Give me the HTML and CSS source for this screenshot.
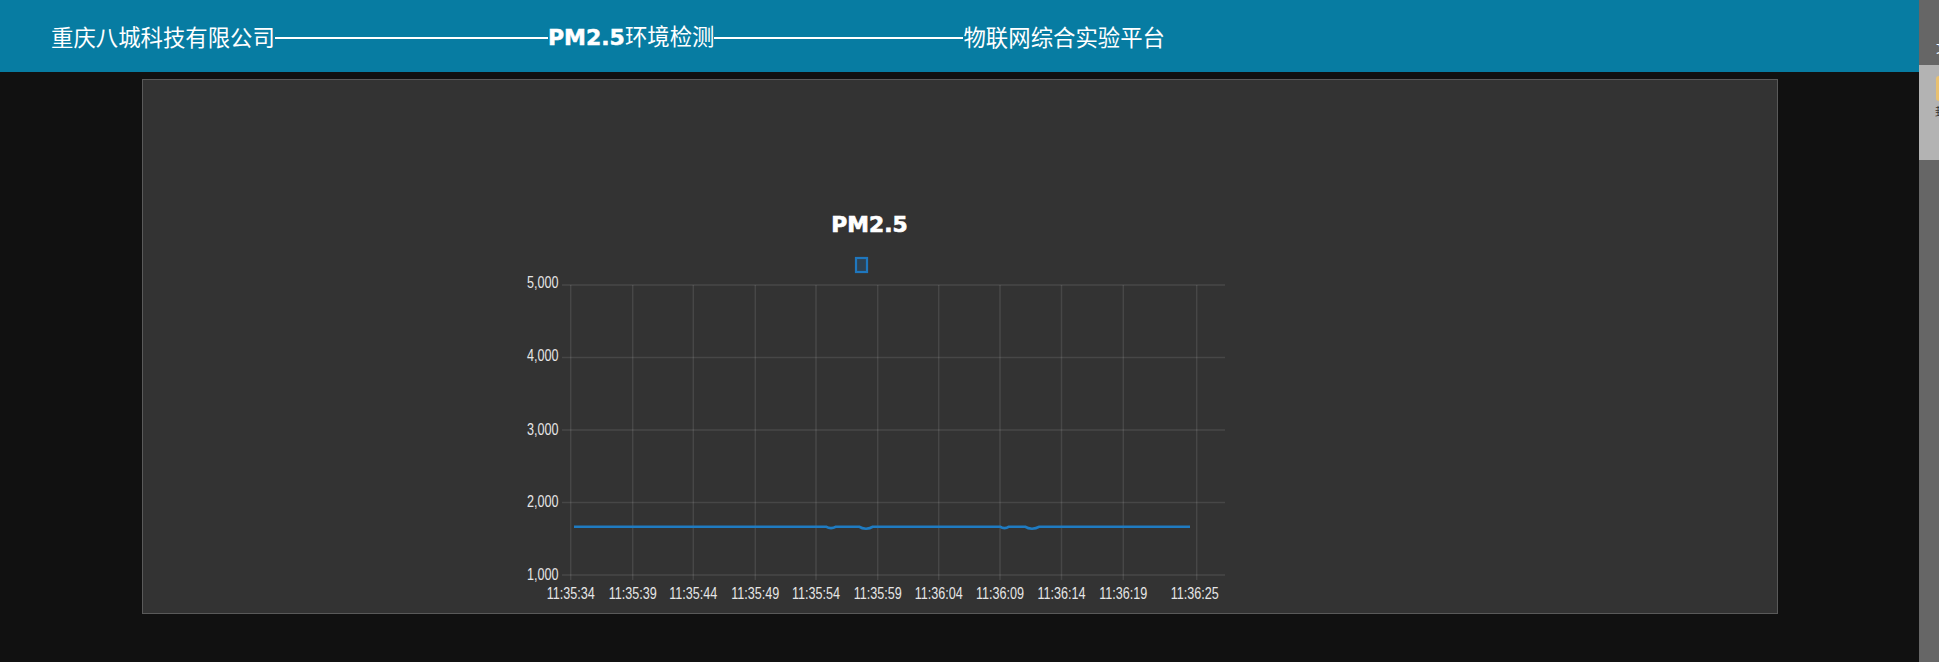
FILE: index.html
```html
<!DOCTYPE html>
<html lang="zh-CN">
<head>
<meta charset="utf-8">
<title>PM2.5环境检测</title>
<link rel="stylesheet" href="styles.css">
</head>
<body>
<div class="page">
  <header class="topbar">
    <span class="htext">重庆八城科技有限公司</span>
    <span class="hline hline-1"></span>
    <span class="htext"><b class="pm">PM2.5</b>环境检测</span>
    <span class="hline hline-2"></span>
    <span class="htext">物联网综合实验平台</span>
  </header>
  <main class="panel">
    <svg class="chart" width="1634" height="533" viewBox="143 80 1634 533" xmlns="http://www.w3.org/2000/svg">
      <text class="c-title" x="869.5" y="231.5" text-anchor="middle">PM2.5</text>
      <rect class="c-legend" x="856" y="258" width="11" height="14"/>
      <g class="c-grid">
        <line x1="562" y1="285" x2="1225" y2="285"/>
        <line x1="562" y1="357.5" x2="1225" y2="357.5"/>
        <line x1="562" y1="430" x2="1225" y2="430"/>
        <line x1="562" y1="502.5" x2="1225" y2="502.5"/>
        <line x1="562" y1="575" x2="1225" y2="575"/>
        <line x1="570.7" y1="285" x2="570.7" y2="580"/>
        <line x1="632.7" y1="285" x2="632.7" y2="580"/>
        <line x1="693.3" y1="285" x2="693.3" y2="580"/>
        <line x1="755.3" y1="285" x2="755.3" y2="580"/>
        <line x1="816" y1="285" x2="816" y2="580"/>
        <line x1="877.7" y1="285" x2="877.7" y2="580"/>
        <line x1="938.7" y1="285" x2="938.7" y2="580"/>
        <line x1="1000" y1="285" x2="1000" y2="580"/>
        <line x1="1061.5" y1="285" x2="1061.5" y2="580"/>
        <line x1="1123.3" y1="285" x2="1123.3" y2="580"/>
        <line x1="1196.7" y1="285" x2="1196.7" y2="580"/>
      </g>
      <g class="c-ylab" text-anchor="end">
        <text x="559" y="287.5">5,000</text>
        <text x="559" y="360">4,000</text>
        <text x="559" y="434">3,000</text>
        <text x="559" y="506.5">2,000</text>
        <text x="559" y="579">1,000</text>
      </g>
      <g class="c-xlab" text-anchor="middle">
        <text x="570.7" y="598">11:35:34</text>
        <text x="632.7" y="598">11:35:39</text>
        <text x="693.3" y="598">11:35:44</text>
        <text x="755.3" y="598">11:35:49</text>
        <text x="816" y="598">11:35:54</text>
        <text x="877.7" y="598">11:35:59</text>
        <text x="938.7" y="598">11:36:04</text>
        <text x="1000" y="598">11:36:09</text>
        <text x="1061.5" y="598">11:36:14</text>
        <text x="1123.3" y="598">11:36:19</text>
        <text x="1194.7" y="598">11:36:25</text>
      </g>
      <path class="c-line" d="M574 526.7 L826 526.7 Q831 529.5 836 526.7 L859 526.7 Q862 528.7 866 528.7 Q870 528.7 873 526.7 L1000 526.7 Q1004.5 529.5 1009 526.7 L1025 526.7 Q1028 528.7 1032 528.7 Q1036 528.7 1039.5 526.7 L1190 526.7"/>
    </svg>
  </main>
</div>
<aside class="sidedock">
  <div class="dock-top"><span class="dock-glyph">文</span></div>
  <div class="dock-panel">
    <span class="dock-tag"></span>
    <span class="dock-text">封</span>
  </div>
</aside>
</body>
</html>
```
FILE: styles.css
```css
html, body {
  margin: 0;
  padding: 0;
  background: #111111;
  height: 100%;
  overflow: hidden;
}

.page {
  margin-right: 20px;
}

.topbar {
  height: 72px;
  background: #077ca2;
  display: flex;
  align-items: center;
  padding-left: 51px;
  color: #ffffff;
  font-family: "Noto Sans CJK SC", "Liberation Sans", sans-serif;
  font-size: 22.4px;
  line-height: 1;
}

.htext {
  white-space: nowrap;
  display: inline-flex;
  align-items: baseline;
}

.pm {
  font-family: "DejaVu Sans", sans-serif;
  font-weight: bold;
  font-size: 22px;
  letter-spacing: 0;
  -webkit-text-stroke: 0.5px #ffffff;
}

.hline {
  display: inline-block;
  height: 2px;
  background: #ffffff;
  margin-top: 4px;
}

.hline-1 { width: 273px; }
.hline-2 { width: 249px; }

.panel {
  display: block;
  width: 1634px;
  height: 533px;
  margin: 7px auto 0;
  background: #333333;
  border: 1px solid #5a5a5a;
}

.chart {
  display: block;
}

.c-title {
  font-family: "DejaVu Sans", sans-serif;
  font-weight: bold;
  font-size: 21.8px;
  fill: #ffffff;
  stroke: #ffffff;
  stroke-width: 0.7px;
}

.c-legend {
  fill: rgba(31, 119, 190, 0.22);
  stroke: #1f77be;
  stroke-width: 2.2;
}

.c-grid line {
  stroke: rgba(255, 255, 255, 0.1);
  stroke-width: 1.5;
}

.c-ylab text,
.c-xlab text {
  font-family: "Liberation Sans", Arial, sans-serif;
  font-size: 13px;
  fill: #e6e6e6;
  transform-box: fill-box;
  transform-origin: center;
  transform: scale(0.97, 1.22);
}

.c-line {
  fill: none;
  stroke: #1f7bc1;
  stroke-width: 2.6;
  stroke-linejoin: round;
}

.sidedock {
  position: fixed;
  top: 0;
  right: 0;
  width: 20px;
  height: 100%;
  background: #666666;
  overflow: hidden;
  font-family: "Noto Sans CJK SC", sans-serif;
}

.dock-top {
  height: 65px;
  position: relative;
}

.dock-glyph {
  position: absolute;
  left: 17px;
  top: 40px;
  color: #ffffff;
  font-size: 13px;
  line-height: 1;
}

.dock-panel {
  height: 95px;
  background: #b3b3b3;
  position: relative;
}

.dock-tag {
  position: absolute;
  left: 17px;
  top: 11px;
  width: 14px;
  height: 25px;
  background: #e8c070;
  border-radius: 3px;
}

.dock-text {
  position: absolute;
  left: 16px;
  top: 41px;
  font-size: 11px;
  line-height: 1;
  color: #333333;
}
```
